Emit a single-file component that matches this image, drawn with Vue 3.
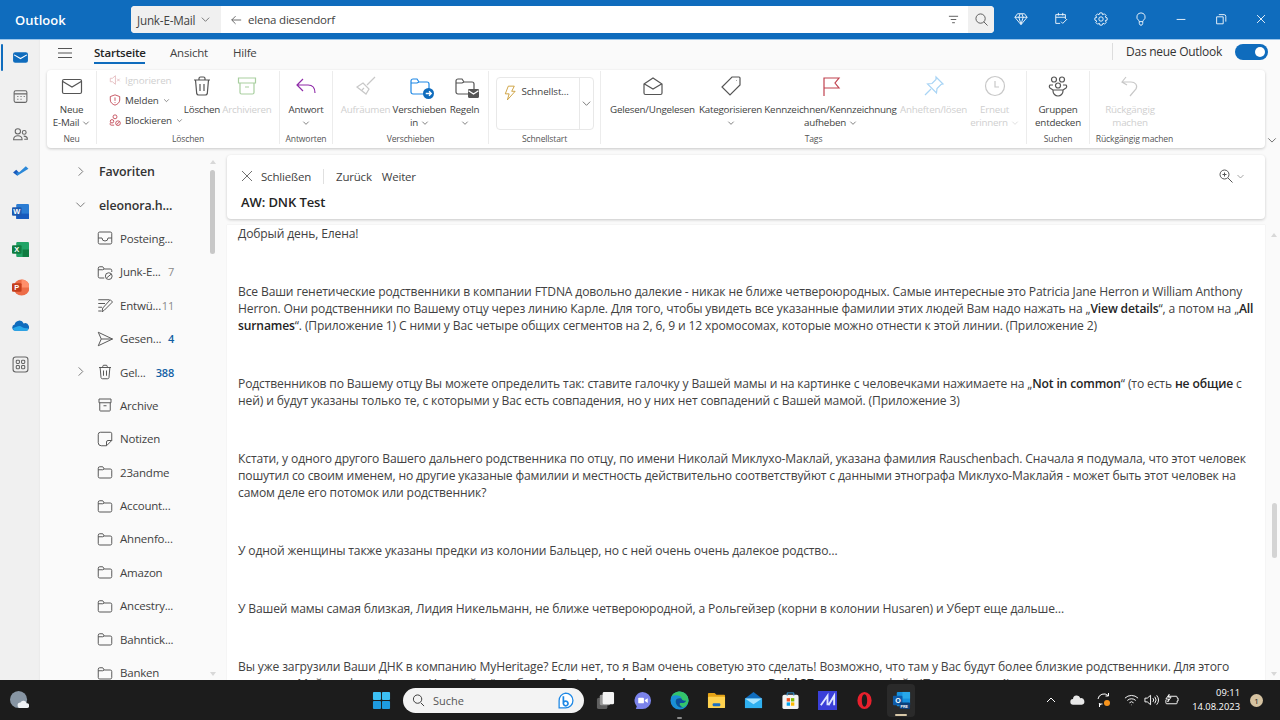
<script setup>
const stroke = {
  mail: 'M4 5.500h16a1.500 1.500 0 0 1 1.500 1.500v11a1.500 1.500 0 0 1-1.500 1.500H4A1.500 1.500 0 0 1 2.500 18V7A1.500 1.500 0 0 1 4 5.500zM2.800 7.500l9.200 5.500 9.200-5.500',
  trash: 'M4 6h16M9 6V4.500A1.500 1.500 0 0 1 10.500 3h3A1.500 1.500 0 0 1 15 4.500V6M5.500 6l1.200 13.500A2 2 0 0 0 8.700 21h6.600a2 2 0 0 0 2-1.500L18.500 6M10 10v7M14 10v7',
  archive: 'M3.500 4h17v5h-17zM5 9v9.500A1.500 1.500 0 0 0 6.500 20h11a1.500 1.500 0 0 0 1.500-1.500V9M10 13h4',
  reply: 'M9 5l-6 6 6 6M3 11h11c4 0 7 2.500 7 8',
  broom: 'M21 3l-8 8M9 9l6 6-3 5-9-7zM8 16l2-2',
  folder: 'M3 7a2 2 0 0 1 2-2h4l2 3h8a2 2 0 0 1 2 2v8a2 2 0 0 1-2 2H5a2 2 0 0 1-2-2zM3 9h6l2-1',
  open: 'M3 10l9-6 9 6v9a1.500 1.500 0 0 1-1.500 1.500h-15A1.500 1.500 0 0 1 3 19zM3.500 10l8.500 5 8.500-5',
  tag: 'M13 3h7a1 1 0 0 1 1 1v7L11 21l-8-8zM17 6.500h.5',
  flag: 'M5 22V4h15l-4 5 4 5H5',
  pin: 'M14 3l7 7-2 .5-4 4-.5 4.500-9-9 4.500-.5 4-4zM9 15l-6 6',
  clock: 'M12 2.500a9.500 9.500 0 1 0 0 19 9.500 9.500 0 0 0 0-19zM12 7v6h4',
  groups: 'M8 3a2.500 2.500 0 1 0 0 5 2.500 2.500 0 0 0 0-5zM16 3a2.500 2.500 0 1 0 0 5 2.500 2.500 0 0 0 0-5zM12 9a2.500 2.500 0 1 0 0 5 2.500 2.500 0 0 0 0-5zM7 11H4a2 2 0 0 0 0 3l3 2M17 11h3a2 2 0 0 1 0 3l-3 2M7 16h10v1a5 5 0 0 1-10 0z',
  undo: 'M8 3L4 8l5 3M4 8h9c4 0 7 3 5 7l-6 7',
  inbox: 'M5 4h14a2 2 0 0 1 2 2v12a2 2 0 0 1-2 2H5a2 2 0 0 1-2-2V6a2 2 0 0 1 2-2zM3 12h5a4 4 0 0 0 8 0h5',
  junk: 'M3 7a2 2 0 0 1 2-2h4l2 3h8a2 2 0 0 1 2 2v2M3 7v11a2 2 0 0 0 2 2h6M3 9h6l2-1M17 13a4.500 4.500 0 1 0 0 9 4.500 4.500 0 0 0 0-9zM14 20l6-5',
  draft: 'M3 5h15M3 10h9M3 15h5M8 21l1-5L19 5l3 3-11 11zM3 20h4',
  sent: 'M3 3l19 9-19 9 4-9zM7 12h15',
  note: 'M6 3h13a2 2 0 0 1 2 2v9l-7 7H7a4 4 0 0 1-4-4V6a3 3 0 0 1 3-3zM21 14h-5a2 2 0 0 0-2 2v5',
  box: 'M4 4h16v5H4zM5 9v10a1 1 0 0 0 1 1h12a1 1 0 0 0 1-1V9M10 13h4'
}

const ribbonGroups = [
  { name: 'Neu', width: 50, tools: [{ icon: 'mail', label: ['Neue', 'E-Mail'], chev: true, width: 50, color: '#555' }] },
  { name: 'Löschen', width: 183, stack: true, tools: [
    { icon: 'trash', label: ['Löschen'], width: 44, color: '#555' },
    { icon: 'archive', label: ['Archivieren'], width: 46, color: '#a9cfa0', off: true }
  ] },
  { name: 'Antworten', width: 53, tools: [{ icon: 'reply', label: ['Antwort', ''], chev: true, width: 53, color: '#8f2ba8' }] },
  { name: 'Verschieben', width: 156, tools: [
    { icon: 'broom', label: ['Aufräumen'], width: 56, color: '#c8c8c8', off: true },
    { icon: 'folder', label: ['Verschieben', 'in'], chev: true, width: 52, color: '#1e88e5', badge: 'move' },
    { icon: 'folder', label: ['Regeln', ''], chev: true, width: 38, color: '#555', badge: 'rules' }
  ] },
  { name: 'Schnellstart', width: 112, quick: true, tools: [] },
  { name: 'Tags', width: 426, tools: [
    { icon: 'open', label: ['Gelesen/Ungelesen'], width: 88, color: '#555' },
    { icon: 'tag', label: ['Kategorisieren', ''], chev: true, width: 68, color: '#555' },
    { icon: 'flag', label: ['Kennzeichnen/Kennzeichnung', 'aufheben'], chev: true, width: 132, color: '#c0424f' },
    { icon: 'pin', label: ['Anheften/lösen'], width: 74, color: '#a8d4f5', off: true },
    { icon: 'clock', label: ['Erneut', 'erinnern'], chev: true, width: 48, color: '#c8c8c8', off: true }
  ] },
  { name: 'Suchen', width: 63, tools: [{ icon: 'groups', label: ['Gruppen', 'entdecken'], width: 63, color: '#555' }] },
  { name: 'Rückgängig machen', width: 175, wide: true, tools: [{ icon: 'undo', label: ['Rückgängig', 'machen'], width: 80, color: '#c8c8c8', off: true }] }
]

const folders = [
  { label: 'Posteing...', icon: 'inbox' },
  { label: 'Junk-E...', icon: 'junk', count: '7' },
  { label: 'Entwü...', icon: 'draft', count: '11' },
  { label: 'Gesen...', icon: 'sent', count: '4', blue: true },
  { label: 'Gel...', icon: 'trash', count: '388', blue: true, arrow: true },
  { label: 'Archive', icon: 'box' },
  { label: 'Notizen', icon: 'note' },
  { label: '23andme', icon: 'folder' },
  { label: 'Account...', icon: 'folder' },
  { label: 'Ahnenfo...', icon: 'folder' },
  { label: 'Amazon', icon: 'folder' },
  { label: 'Ancestry...', icon: 'folder' },
  { label: 'Bahntick...', icon: 'folder' },
  { label: 'Banken', icon: 'folder' }
]
</script>

<template>
  <div class="app">
    <header class="titlebar">
      <div class="brand">Outlook</div>
      <div class="search">
        <div class="scope">Junk-E-Mail
          <svg class="chev-s" viewBox="0 0 12 12"><path d="M2 4l4 4 4-4" /></svg>
        </div>
        <svg class="back" viewBox="0 0 14 14"><path d="M13 7H2M6.500 2.500L2 7l4.500 4.500" /></svg>
        <div class="query">elena diesendorf</div>
        <svg class="filter" viewBox="0 0 12 12"><path d="M1 2.500h10M3 6h6M4.500 9.500h3" /></svg>
        <div class="search-btn">
          <svg viewBox="0 0 14 14"><path d="M6 1a5 5 0 1 0 0 10A5 5 0 0 0 6 1zM9.500 9.500L13.500 13.500" /></svg>
        </div>
      </div>
      <div class="win-icons">
        <svg viewBox="0 0 16 16"><path d="M4 2h8l3 4-7 8.500L1 6zM1 6h14M5.500 6L8 14l2.500-8M5.500 6L7 2M10.500 6L9 2" /></svg>
        <svg viewBox="0 0 16 16"><path d="M2 3h11v5M2 3v10h5M2 6h11M5 1v3M10 1v3M8 11l2 2 5-5" /></svg>
        <svg viewBox="0 0 16 16"><path d="M8 5.500a2.500 2.500 0 1 0 0 5 2.500 2.500 0 0 0 0-5zM6.700 1L9.300 1 9.700 3 12.030 2.130 13.870 3.970 12.740 5.670 15 6.700 15 9.300 13 9.700 13.870 12.030 12.030 13.870 10.330 12.740 9.300 15 6.700 15 6.300 13 3.970 13.870 2.130 12.030 3.260 10.330 1 9.300 1 6.700 3 6.300 2.130 3.970 3.970 2.130 5.670 3.260z" /></svg>
        <svg viewBox="0 0 16 16"><path d="M8 1a4.700 4.700 0 0 0-2.800 8.500c.5.500.8 1 .8 1.500h4c0-.5.3-1 .8-1.500A4.700 4.700 0 0 0 8 1zM6 11v2l1 2h2l1-2v-2" /></svg>
        <svg viewBox="0 0 16 16"><path d="M3 8.500h10" /></svg>
        <svg viewBox="0 0 16 16"><path d="M3 5.500h7.500v8H3zM5.500 3h6a2 2 0 0 1 2 2v6" /></svg>
        <svg viewBox="0 0 16 16"><path d="M3.500 3.500l9 9M12.500 3.500l-9 9" /></svg>
      </div>
    </header>

    <div class="workspace">
      <nav class="rail">
        <div class="rail-item active">
          <svg viewBox="0 0 16 16"><rect x="1" y="3" width="14" height="10" rx="2" fill="#0f6cbd" /><path d="M2 5.500l6 3.500 6-3.500" stroke="#fff" /></svg>
        </div>
        <div class="rail-item">
          <svg viewBox="0 0 16 16"><rect x="2" y="2.500" width="12" height="11" rx="1.500" stroke="#666" /><path d="M2 5.500h12M5 8h1M8 8h1M11 8h1M5 10.500h1M8 10.500h1" stroke="#666" /></svg>
        </div>
        <div class="rail-item">
          <svg viewBox="0 0 16 16"><g stroke="#666"><circle cx="5.500" cy="5" r="2.500" /><circle cx="11.500" cy="6" r="1.800" /><path d="M1.500 13c0-5 8-5 8 0zM11 9.500c2.500 0 3.500 1 3.500 3h-3" /></g></svg>
        </div>
        <div class="rail-item">
          <svg viewBox="0 0 16 16"><path d="M1 8l3-2.500L6.500 8 5 11z" fill="#185abd" /><path d="M5 11L4 8l2.500 0L13 2l2.500 2.500z" fill="#2b88d8" /></svg>
        </div>
        <div class="rail-item">
          <svg viewBox="0 0 16 16"><rect x="4" y="1" width="12" height="14" rx="1" fill="#2b7cd3" /><rect x="4" y="10" width="12" height="5" fill="#185abd" /><rect y="4" width="9" height="8" rx="1" fill="#1d5ab0" /><text x="4.500" y="10.500" class="rail-letter">W</text></svg>
        </div>
        <div class="rail-item">
          <svg viewBox="0 0 16 16"><rect x="4" y="1" width="12" height="14" rx="1" fill="#21a366" /><rect x="10" y="8" width="6" height="7" fill="#107c41" /><rect y="4" width="9" height="8" rx="1" fill="#107c41" /><text x="4.500" y="10.500" class="rail-letter">X</text></svg>
        </div>
        <div class="rail-item">
          <svg viewBox="0 0 16 16"><circle cx="9" cy="8" r="7.500" fill="#ed6c47" /><path d="M9 .5a7.500 7.500 0 0 1 7.500 7.500H9z" fill="#ff8f6b" /><rect y="4" width="9" height="8" rx="1" fill="#c43e1c" /><text x="4.500" y="10.500" class="rail-letter">P</text></svg>
        </div>
        <div class="rail-item">
          <svg viewBox="0 0 16 16"><path d="M3 13a3 3 0 0 1-.5-5.900A4.500 4.500 0 0 1 11 6a3.500 3.500 0 0 1 2.500 7z" fill="#0f6cbd" /><path d="M1 10.500c3-1 4-2 6-2s4 3 8 2c.5 1.500 0 2.500-1.500 2.500H3c-1 0-2-1-2-2.500z" fill="#28a8ea" /></svg>
        </div>
        <div class="rail-item">
          <svg viewBox="0 0 16 16"><g stroke="#666"><rect x="1" y="1" width="14" height="14" rx="2.500" /><rect x="4" y="4" width="3" height="3" rx=".8" /><rect x="9" y="4" width="3" height="3" rx=".8" /><rect x="4" y="9" width="3" height="3" rx=".8" /><rect x="9" y="9" width="3" height="3" rx=".8" /></g></svg>
        </div>
      </nav>

      <div class="content">
        <div class="tabs">
          <svg class="burger" viewBox="0 0 16 12"><path d="M1 1.500h14M1 6h14M1 10.500h14" /></svg>
          <div class="tab current">Startseite</div>
          <div class="tab tab-view">Ansicht</div>
          <div class="tab tab-help">Hilfe</div>
          <div class="new-outlook">Das neue Outlook</div>
          <div class="toggle"><span></span></div>
        </div>

        <section class="ribbon">
          <div
            v-for="group in ribbonGroups"
            :key="group.name"
            class="group"
            :class="{ 'group-wide': group.wide }"
            :style="{ width: `${group.width}px` }"
          >
            <div class="group-tools" :class="{ 'tools-left': group.stack }">
              <div v-if="group.stack" class="stack">
                <div class="stack-row off">
                  <svg viewBox="0 0 14 14"><path d="M1.500 5v4h2.500l3.500 3V2L4 5zM9.500 5.500l3 3M12.500 5.500l-3 3" stroke="#e3b9bc" /></svg>
                  Ignorieren
                </div>
                <div class="stack-row">
                  <svg viewBox="0 0 14 14"><path d="M7 1l5.500 2v4c0 3-2.500 5-5.500 6-3-1-5.500-3-5.500-6V3zM7 4v4M7 9.500v1" stroke="#c0424f" /></svg>
                  Melden <svg class="mini-chev" viewBox="0 0 12 12"><path d="M2 4l4 4 4-4" /></svg>
                </div>
                <div class="stack-row">
                  <svg viewBox="0 0 14 14"><path d="M7 1a2.300 2.300 0 1 0 0 4.600A2.300 2.300 0 0 0 7 1zM3.500 6.500a2 2 0 1 0 0 4 2 2 0 0 0 0-4zM6 13H2.500C1 13 1 11 2 10M10.500 8a2.700 2.700 0 1 0 0 5.400 2.700 2.700 0 0 0 0-5.400zM8.700 12.500l3.600-3.500" stroke="#c0424f" /></svg>
                  Blockieren <svg class="mini-chev" viewBox="0 0 12 12"><path d="M2 4l4 4 4-4" /></svg>
                </div>
              </div>
              <div v-if="group.quick" class="quick">
                <div class="quick-main">
                  <svg viewBox="0 0 14 18"><path d="M5 1h7L9 7h4L4 17l2-7H1.500z" /></svg>
                  Schnellst...
                </div>
                <div class="quick-more">
                  <svg class="chev-s" viewBox="0 0 12 12"><path d="M2 4l4 4 4-4" /></svg>
                </div>
              </div>
              <div
                v-for="tool in group.tools"
                :key="tool.label[0]"
                class="tool"
                :class="{ off: tool.off }"
                :style="{ width: `${tool.width}px` }"
              >
                <div class="tool-icon">
                  <svg viewBox="0 0 24 24"><path :d="stroke[tool.icon]" :style="{ stroke: tool.color }" /></svg>
                  <svg v-if="tool.badge === 'move'" class="badge" viewBox="0 0 10 10"><circle cx="5" cy="5" r="5" fill="#0f6cbd" /><path d="M2.500 5h5M5.500 3l2 2-2 2" /></svg>
                  <svg v-if="tool.badge === 'rules'" class="badge" viewBox="0 0 10 10"><rect y="1" width="10" height="8" rx="1" fill="#555" /><path d="M.5 2.500L5 5.500l4.500-3" /></svg>
                </div>
                <div v-for="(line, i) in tool.label" :key="i" class="tool-label">
                  {{ line }}
                  <svg v-if="tool.chev && i === tool.label.length - 1" class="mini-chev" viewBox="0 0 12 12"><path d="M2 4l4 4 4-4" /></svg>
                </div>
              </div>
            </div>
            <div class="group-name">{{ group.name }}</div>
          </div>
          <svg class="collapse" viewBox="0 0 12 12"><path d="M1.500 4L6 8.500 10.500 4" /></svg>
        </section>

        <div class="lower">
          <aside class="folders">
            <div class="folder-list">
              <div class="folder-head">
                <svg class="head-chev" viewBox="0 0 12 12"><path d="M4 1.500L8.500 6 4 10.500" /></svg>
                Favoriten
              </div>
              <div class="folder-head">
                <svg class="head-chev" viewBox="0 0 12 12"><path d="M1.500 4L6 8.500 10.500 4" /></svg>
                eleonora.h...
              </div>
              <div v-for="folder in folders" :key="folder.label" class="folder">
                <svg v-if="folder.arrow" class="folder-arrow" viewBox="0 0 12 12"><path d="M4 1.500L8.500 6 4 10.500" /></svg>
                <svg class="folder-icon" viewBox="0 0 24 24"><path :d="stroke[folder.icon]" /></svg>
                <span class="folder-label">{{ folder.label }}</span>
                <span v-if="folder.count" class="count" :class="{ blue: folder.blue }">{{ folder.count }}</span>
              </div>
            </div>
            <div class="pane-scroll">
              <span class="arrow-up"></span>
              <span class="pane-thumb"></span>
              <span class="arrow-down"></span>
            </div>
          </aside>

          <main class="reader">
            <div class="read-head">
              <div class="read-actions">
                <svg class="close-x" viewBox="0 0 12 12"><path d="M1 1l10 10M11 1L1 11" /></svg>
                <span>Schließen</span>
                <i class="action-sep"></i>
                <span>Zurück</span>
                <span class="next">Weiter</span>
                <svg class="zoom-ico" viewBox="0 0 14 14"><path d="M5.500 1a4.500 4.500 0 1 0 0 9 4.500 4.500 0 0 0 0-9zM9 9l4.500 4.500M3.500 5.500h4M5.500 3.500v4" /></svg>
                <svg class="zoom-chev" viewBox="0 0 12 12"><path d="M2 4l4 4 4-4" /></svg>
              </div>
              <div class="subject">AW: DNK Test</div>
            </div>
            <div class="message-row">
              <article class="message">
                <p>Добрый день, Елена!</p>
                <p>Все Ваши генетические родственники в компании FTDNA довольно далекие - никак не ближе четвероюродных. Самые интересные это Patricia Jane Herron и William Anthony<br>Herron. Они родственники по Вашему отцу через линию Карле. Для того, чтобы увидеть все указанные фамилии этих людей Вам надо нажать на „<b>View details</b>“, а потом на „<b>All</b><br><b>surnames</b>“. (Приложение 1) С ними у Вас четыре общих сегментов на 2, 6, 9 и 12 хромосомах, которые можно отнести к этой линии. (Приложение 2)</p>
                <p>Родственников по Вашему отцу Вы можете определить так: ставите галочку у Вашей мамы и на картинке с человечками нажимаете на „<b>Not in common</b>“ (то есть <b>не общие</b> с<br>ней) и будут указаны только те, с которыми у Вас есть совпадения, но у них нет совпадений с Вашей мамой. (Приложение 3)</p>
                <p>Кстати, у одного другого Вашего дальнего родственника по отцу, по имени Николай Миклухо-Маклай, указана фамилия Rauschenbach. Сначала я подумала, что этот человек<br>пошутил со своим именем, но другие указаные фамилии и местность действительно соответствуйют с данными этнографа Миклухо-Маклайя - может быть этот человек на<br>самом деле его потомок или родственник?</p>
                <p>У одной женщины также указаны предки из колонии Бальцер, но с ней очень очень далекое родство…</p>
                <p>У Вашей мамы самая близкая, Лидия Никельманн, не ближе четвероюродной, а Рольгейзер (корни в колонии Husaren) и Уберт еще дальше…</p>
                <p>Вы уже загрузили Ваши ДНК в компанию MyHeritage? Если нет, то я Вам очень советую это сделать! Возможно, что там у Вас будут более близкие родственники. Для этого<br>нажмите „Мой профиль“, затем „Настройки“, выберите <b>Data download</b> и затем нажмите на <b>Build 37</b> и загрузите файл (Приложение 4)</p>
              </article>
              <div class="main-scroll">
                <span class="arrow-up"></span>
                <span class="main-thumb"></span>
                <span class="arrow-down"></span>
              </div>
            </div>
          </main>
        </div>
      </div>
    </div>

    <footer class="taskbar">
      <div class="weather">
        <svg viewBox="0 0 20 20"><circle cx="9" cy="9" r="9" fill="#8795a3" /><path d="M11 18a3 3 0 0 1 0-6 3.500 3.500 0 0 1 6.500 1 2.500 2.500 0 0 1 .5 5z" fill="#eef1f4" /></svg>
      </div>
      <div class="dock">
        <svg class="dock-ico" viewBox="0 0 20 20"><rect x="1" y="1" width="8.500" height="8.500" rx="1" fill="#3cc0f4" /><rect x="10.500" y="1" width="8.500" height="8.500" rx="1" fill="#3cc0f4" /><rect x="1" y="10.500" width="8.500" height="8.500" rx="1" fill="#1e9be0" /><rect x="10.500" y="10.500" width="8.500" height="8.500" rx="1" fill="#1e9be0" /></svg>
        <div class="task-search">
          <svg viewBox="0 0 14 14"><path d="M6 1a4.500 4.500 0 1 0 0 9 4.500 4.500 0 0 0 0-9zM9.500 9.500l3.500 3.500" /></svg>
          <span>Suche</span>
          <svg class="bing" viewBox="0 0 16 16"><path d="M8 1a7 7 0 0 1 0 14H2V8a7 7 0 0 1 6-7z" fill="#fff" stroke-width="1.200" /><path d="M6 4v7a2.200 2.200 0 1 0 0-.5" stroke-width="1.600" /></svg>
        </div>
        <svg class="dock-ico" viewBox="0 0 20 20"><rect x="1" y="7" width="11" height="12" rx="2" fill="#5f5f5f" /><rect x="4" y="4" width="11" height="11" rx="1.500" fill="#9a9a9a" /><rect x="7" y="1" width="12" height="13" rx="1.500" fill="#f4f4f4" /></svg>
        <svg class="dock-ico" viewBox="0 0 20 20"><path d="M10 1a9 9 0 0 1 0 18H3l1-3a9 9 0 0 1 6-15z" fill="#7b83eb" /><rect x="5.500" y="7" width="6" height="6" rx="1" fill="#fff" /><path d="M12.500 9.500l3-2v5l-3-2z" fill="#fff" /></svg>
        <span class="edge-wrap">
          <svg class="dock-ico" viewBox="0 0 20 20"><circle cx="10" cy="10" r="9.500" fill="#1a8fd8" /><path d="M19.500 10c0-5-4-9.500-9.500-9.500C6 .5 2.500 3 1.500 6 5 3.500 11 4 12.500 8c-3-1.500-7 0-6.500 4 .5 4 5 6 8 5 3-1 5.500-4 5.500-7z" fill="#34c46a" /><path d="M6 11c0-3 3-4 6-3 1 2 3 3 5 2-1 3-4 3-6 2.500-2 .5 0 4 3 4.500-4 1.500-8-2-8-6z" fill="#0b4f9e" /></svg>
        </span>
        <svg class="dock-ico" viewBox="0 0 20 20"><path d="M1 3a1 1 0 0 1 1-1h6l2 2h8a1 1 0 0 1 1 1v3H1z" fill="#e5a316" /><rect x="1" y="6" width="18" height="12" rx="1" fill="#ffd24f" /><rect x="6" y="13" width="8" height="3" rx="1" fill="#1b6fc2" /></svg>
        <svg class="dock-ico" viewBox="0 0 20 20"><path d="M10 1l9 7v10H1V8z" fill="#0f6cbd" /><rect x="1" y="8" width="18" height="10" fill="#2fb0f0" /><path d="M1 8l9 6 9-6" fill="#a6e3ff" /></svg>
        <svg class="dock-ico" viewBox="0 0 20 20"><rect x="1.500" y="4" width="17" height="15" rx="2" fill="#f4f4f4" /><path d="M6.500 5V2h7v3" stroke="#3aa0e0" /><rect x="6" y="7.500" width="3.500" height="3.500" fill="#f25022" /><rect x="10.500" y="7.500" width="3.500" height="3.500" fill="#7fba00" /><rect x="6" y="12" width="3.500" height="3.500" fill="#00a4ef" /><rect x="10.500" y="12" width="3.500" height="3.500" fill="#ffb900" /></svg>
        <svg class="dock-ico" viewBox="0 0 20 20"><rect width="20" height="20" fill="#3a3fd8" /><path d="M3 15L10 5v10M11 15L17 5v10" stroke="#dfe6ff" stroke-width="2" /></svg>
        <svg class="dock-ico" viewBox="0 0 20 20"><path d="M10 1a7.500 9 0 1 0 0 18 7.500 9 0 0 0 0-18zm0 2.500c1.800 0 2.800 3 2.800 6.500s-1 6.500-2.800 6.500S7.200 13.500 7.200 10 8.200 3.500 10 3.500z" fill="#e8202d" /></svg>
        <div class="dock-active">
          <svg class="dock-ico" viewBox="0 0 20 20"><rect x="5" y="1" width="14" height="15" rx="1" fill="#1490df" /><rect x="11" y="1" width="8" height="7" fill="#28a8ea" /><rect x="1" y="5" width="10" height="10" rx="1" fill="#0f5ba7" /><text x="3.300" y="13" class="outlook-letter">O</text><rect x="8" y="12" width="11" height="7" rx="1" fill="#0c3f7a" /><text x="9" y="17.500" class="pre-letter">PRE</text></svg>
        </div>
      </div>
      <div class="tray">
        <svg class="tray-up" viewBox="0 0 12 12"><path d="M2 8l4-4 4 4" /></svg>
        <svg class="tray-cloud" viewBox="0 0 16 12"><path d="M3.500 11a3 3 0 0 1-.3-6A4 4 0 0 1 11 4a3.500 3.500 0 0 1 1.500 7z" fill="#e8e8e8" /></svg>
        <svg class="tray-sync" viewBox="0 0 16 16"><path d="M2 7a6 6 0 0 1 10-3.500M12.500 1v3h-3M3 11a5 5 0 0 0 2 2M3.500 15v-3h3" /><circle cx="11" cy="11" r="3" fill="#f7941d" /></svg>
        <svg class="tray-ico" viewBox="0 0 16 14"><path d="M1 5a10 10 0 0 1 14 0M3.500 7.500a6.500 6.500 0 0 1 9 0M5.800 10a3 3 0 0 1 4.400 0M8 12v.5" /></svg>
        <svg class="tray-ico" viewBox="0 0 16 14"><path d="M1 5v4h2.500L7 12V2L3.500 5zM9.500 5a3 3 0 0 1 0 4M11.500 3.500a5.500 5.500 0 0 1 0 7M13.500 2a8 8 0 0 1 0 10" /></svg>
        <svg class="tray-ico" viewBox="0 0 16 14"><path d="M5 3h8a1 1 0 0 1 1 1v1h1v3h-1v2a1 1 0 0 1-1 1H3a1 1 0 0 1-1-1V7M5.500 1L2 6h3l-1 3 3.500-5h-3z" /></svg>
        <div class="clock">
          <div>09:11</div>
          <div>14.08.2023</div>
        </div>
        <div class="notify">1</div>
      </div>
    </footer>
  </div>
</template>

<style scoped>
.app {
  width: 1280px;
  height: 720px;
  display: flex;
  flex-direction: column;
  overflow: hidden;
  background: #fafafa;
  color: #424242;
  font-family: "Open Sans", "Noto Sans", sans-serif;
  font-size: 11px;
}

svg {
  display: block;
  flex: none;
  fill: none;
}

.titlebar {
  height: 39px;
  flex: none;
  display: flex;
  align-items: center;
  background: #0f6cbd;
  color: #fff;
  border-bottom: 1px solid #9cc6ea;
  box-sizing: content-box;
}

.brand {
  width: 131px;
  padding-left: 15px;
  box-sizing: border-box;
  font-size: 13px;
  font-weight: 600;
}

.search {
  width: 863px;
  height: 27px;
  display: flex;
  align-items: center;
  background: #fff;
  border-radius: 4px;
  color: #424242;
  overflow: hidden;
}

.scope {
  width: 90px;
  height: 100%;
  flex: none;
  display: flex;
  align-items: center;
  gap: 5px;
  padding-left: 6px;
  box-sizing: border-box;
  background: #f0f0f0;
  font-size: 11.7px;
  letter-spacing: -0.2px;
}

.chev-s {
  width: 11px;
  height: 11px;
}

.chev-s path {
  stroke: #616161;
  stroke-width: 0.9;
}

.back {
  width: 12px;
  height: 12px;
  margin-left: 9px;
}

.back path,
.filter path {
  stroke: #555;
}

.query {
  flex: 1;
  margin-left: 6px;
  font-size: 11.5px;
  letter-spacing: -0.2px;
}

.filter {
  width: 11px;
  height: 11px;
  margin-right: 9px;
}

.search-btn {
  width: 26px;
  height: 100%;
  display: flex;
  align-items: center;
  justify-content: center;
  background: #f0f0f0;
}

.search-btn svg {
  width: 13px;
  height: 13px;
}

.search-btn path {
  stroke: #555;
}

.win-icons {
  display: flex;
  gap: 26px;
  margin: -2px 0 0 20px;
}

.win-icons svg {
  width: 14px;
  height: 14px;
}

.win-icons path {
  stroke: #fff;
}

.workspace {
  flex: 1;
  min-height: 0;
  display: flex;
}

.rail {
  width: 40px;
  flex: none;
  background: #f0f0f0;
  box-shadow: inset -2px 0 2px -2px #ddd;
}

.rail-item {
  position: relative;
  height: 38.3px;
  display: flex;
  align-items: center;
  justify-content: center;
}

.rail-item:first-child {
  margin: -2px 0 0.7px;
}

.rail-item svg {
  width: 17px;
  height: 17px;
}

.rail-item.active::before {
  content: "";
  position: absolute;
  left: 1px;
  top: 6px;
  bottom: 5px;
  width: 2px;
  border-radius: 1px;
  background: #0f6cbd;
}

.rail-letter {
  font-family: "Liberation Sans", sans-serif;
  font-size: 7px;
  font-weight: 700;
  fill: #fff;
  text-anchor: middle;
}

.content {
  flex: 1;
  min-width: 0;
  display: flex;
  flex-direction: column;
}

.tabs {
  height: 30px;
  flex: none;
  display: flex;
  align-items: center;
  padding-bottom: 4px;
  box-sizing: border-box;
  font-size: 11.5px;
  letter-spacing: -0.2px;
}

.burger {
  width: 16px;
  height: 12px;
  margin: 0 21px 0 17px;
}

.burger path {
  stroke: #555;
}

.tab {
  line-height: 18px;
}

.tab.current {
  width: 51px;
  font-weight: 600;
  color: #242424;
  box-shadow: 0 2px 0 #0f6cbd;
}

.tab-view,
.tab-help {
  margin-left: 25px;
}

.new-outlook {
  margin: 0 0 3px auto;
  padding-left: 13px;
  border-left: 1px solid #ddd;
  color: #333;
  font-size: 12px;
  letter-spacing: -0.27px;
}

.toggle {
  width: 33px;
  height: 16px;
  margin: 0 12px 3px 13px;
  padding: 3px;
  box-sizing: border-box;
  display: flex;
  justify-content: flex-end;
  border-radius: 8px;
  background: #0f6cbd;
}

.toggle span {
  width: 10px;
  height: 10px;
  border-radius: 50%;
  background: #fff;
}

.ribbon {
  position: relative;
  width: 1218px;
  height: 78px;
  margin-left: 7px;
  flex: none;
  display: flex;
  padding-top: 1px;
  box-sizing: border-box;
  background: #fff;
  border-radius: 4px;
  box-shadow: 0 1px 3px rgba(0, 0, 0, 0.2);
}

.collapse {
  position: absolute;
  right: -12px;
  bottom: 3px;
  width: 10px;
  height: 10px;
}

.collapse path {
  stroke: #555;
}

.group {
  height: 73px;
  display: flex;
  flex-direction: column;
  box-sizing: border-box;
  border-right: 1px solid #ececec;
}

.group-wide {
  border-right: 0;
}

.group-tools {
  flex: 1;
  display: flex;
  justify-content: center;
  min-height: 0;
}

.tools-left,
.group-wide .group-tools {
  justify-content: flex-start;
}

.group-name {
  height: 15px;
  font-size: 8.6px;
  line-height: 20px;
  text-align: center;
  color: #555;
  white-space: nowrap;
  letter-spacing: -0.15px;
}

.group-wide .group-name {
  padding-right: 86px;
}

.tool {
  flex: none;
  display: flex;
  flex-direction: column;
  align-items: center;
  font-size: 9.8px;
  letter-spacing: -0.22px;
  line-height: 13.3px;
  color: #424242;
  white-space: nowrap;
}

.tool.off,
.stack-row.off {
  color: #cfcfcf;
}

.tool-icon {
  position: relative;
  width: 24px;
  height: 24px;
  margin: 3px 0 5px;
}

.tool-icon svg {
  width: 24px;
  height: 24px;
}

.tool-icon path {
  stroke-width: 1.2;
}

.tool-icon .badge {
  position: absolute;
  right: -2px;
  bottom: -1px;
  width: 11px;
  height: 11px;
}

.tool-icon .badge path {
  stroke: #fff;
}

.tool-label {
  height: 13.3px;
  display: flex;
  align-items: center;
  gap: 3px;
}

.mini-chev {
  width: 8px;
  height: 8px;
}

.mini-chev path {
  stroke: currentColor;
}

.stack {
  width: 83px;
  margin-top: -1px;
  padding-left: 12px;
  box-sizing: border-box;
  font-size: 9.8px;
  letter-spacing: -0.1px;
}

.stack-row {
  height: 20px;
  display: flex;
  align-items: center;
  gap: 4px;
  white-space: nowrap;
}

.stack-row svg {
  width: 12px;
  height: 12px;
}

.stack-row .mini-chev {
  width: 7px;
  height: 7px;
}

.quick {
  width: 98px;
  height: 53px;
  margin-top: 6px;
  display: flex;
  border: 1px solid #e8e8e8;
  border-radius: 4px;
  box-sizing: border-box;
  font-size: 9.8px;
  letter-spacing: -0.1px;
}

.quick-main {
  flex: 1;
  display: flex;
  align-items: flex-start;
  gap: 6px;
  padding: 7px 0 0 7px;
}

.quick-main svg {
  width: 12px;
  height: 16px;
}

.quick-main path {
  stroke: #c8972b;
}

.quick-more {
  width: 13px;
  display: flex;
  align-items: center;
  justify-content: center;
  border-left: 1px solid #e8e8e8;
}

.lower {
  flex: 1;
  min-height: 0;
  display: flex;
  margin-top: 7px;
}

.folders {
  width: 180px;
  margin-left: 7px;
  flex: none;
  display: flex;
  overflow: hidden;
}

.folder-list {
  width: 136px;
  margin-right: 24px;
  padding-left: 28px;
  box-sizing: border-box;
}

.folder-head {
  position: relative;
  height: 33.4px;
  display: flex;
  align-items: center;
  padding-left: 24px;
  font-size: 12.4px;
  font-weight: 600;
  letter-spacing: -0.1px;
  color: #333;
  white-space: nowrap;
}

.head-chev,
.folder-arrow {
  position: absolute;
  left: 0;
  top: 11px;
  width: 11px;
  height: 11px;
}

.head-chev path,
.folder-arrow path {
  stroke: #707070;
}

.folder {
  position: relative;
  height: 33.4px;
  display: flex;
  align-items: center;
  padding-left: 21px;
  font-size: 11.5px;
  letter-spacing: -0.2px;
  white-space: nowrap;
}

.folder-icon {
  width: 18px;
  height: 18px;
  margin-right: 6px;
}

.folder-icon path {
  stroke: #555;
  stroke-width: 1.3;
}

.folder-label {
  flex: 1;
  min-width: 0;
}

.count {
  padding-right: 9px;
  font-size: 11px;
  color: #8a8a8a;
}

.count.blue {
  color: #115ea3;
  font-weight: 600;
}

.pane-scroll {
  width: 9px;
  margin-left: 1px;
  display: flex;
  flex-direction: column;
  align-items: center;
}

.pane-thumb {
  width: 5px;
  height: 84px;
  margin-top: 6px;
  border-radius: 3px;
  background: #c8c8c8;
}

.arrow-up,
.arrow-down {
  width: 0;
  height: 0;
  border-left: 3.5px solid transparent;
  border-right: 3.5px solid transparent;
}

.arrow-up {
  margin-top: 5px;
  border-bottom: 4px solid #d8d8d8;
}

.arrow-down {
  margin-top: auto;
  margin-bottom: 4px;
  border-top: 4px solid #d8d8d8;
}

.reader {
  flex: 1;
  min-width: 0;
  display: flex;
  flex-direction: column;
}

.read-head {
  width: 1038px;
  height: 64px;
  flex: none;
  padding: 11px 0 0 14px;
  box-sizing: border-box;
  background: #fff;
  border-radius: 4px;
  box-shadow: 0 1px 3px rgba(0, 0, 0, 0.2);
}

.read-actions {
  display: flex;
  align-items: center;
  height: 20px;
  font-size: 11.5px;
  letter-spacing: -0.2px;
}

.close-x {
  width: 12px;
  height: 12px;
  margin-right: 8px;
}

.close-x path {
  stroke: #707070;
}

.action-sep {
  width: 1px;
  height: 15px;
  margin: 0 12px;
  background: #e0e0e0;
}

.next {
  margin-left: 10px;
}

.zoom-ico {
  width: 14px;
  height: 14px;
  margin-left: auto;
}

.zoom-ico path {
  stroke: #555;
}

.zoom-chev {
  width: 9px;
  height: 9px;
  margin: 0 20px 0 3px;
}

.zoom-chev path {
  stroke: #888;
}

.subject {
  margin-top: 7px;
  font-size: 13px;
  font-weight: 600;
  letter-spacing: -0.1px;
  color: #242424;
}

.message-row {
  flex: 1;
  min-height: 0;
  display: flex;
  margin-top: 6px;
}

.message {
  width: 1038px;
  flex: none;
  padding-left: 11px;
  box-sizing: border-box;
  background: #fff;
  overflow: hidden;
  font-size: 12.1px;
  line-height: 17px;
  white-space: nowrap;
  box-shadow: 0 0 1px #ddd;
}

.message p {
  margin: 0 0 41px;
  letter-spacing: -0.14px;
}

.message b {
  color: #242424;
  font-weight: 600;
}

.main-scroll {
  width: 15px;
  padding-left: 3px;
  box-sizing: border-box;
  display: flex;
  flex-direction: column;
  align-items: center;
}

.main-scroll .arrow-up {
  margin-top: 8px;
}

.main-thumb {
  width: 5px;
  height: 55px;
  margin-top: 266px;
  border-radius: 3px;
  background: #d4d4d4;
}

.taskbar {
  height: 40px;
  flex: none;
  display: flex;
  align-items: center;
  background: #1c1c1c;
  color: #fff;
}

.weather {
  padding-left: 10px;
}

.weather svg {
  width: 19px;
  height: 19px;
}

.dock {
  display: flex;
  align-items: center;
  margin-left: 343px;
  gap: 18px;
}

.dock-ico {
  width: 19px;
  height: 19px;
}

.task-search {
  width: 181px;
  height: 25px;
  display: flex;
  align-items: center;
  padding: 0 10px 0 9px;
  box-sizing: border-box;
  border-radius: 13px;
  background: #f3f3f3;
  color: #555;
  font-size: 11px;
  margin: 0 -6.5px 0 -6px;
}

.task-search svg {
  width: 13px;
  height: 13px;
}

.task-search path {
  stroke: #333;
}

.task-search span {
  flex: 1;
  margin-left: 8px;
}

.task-search .bing {
  width: 17px;
  height: 17px;
}

.task-search .bing path {
  stroke: #1e88e5;
}

.edge-wrap {
  position: relative;
}

.edge-wrap::after {
  content: "";
  position: absolute;
  left: 7px;
  bottom: -9px;
  width: 5px;
  height: 2px;
  border-radius: 1px;
  background: #8a8a8a;
}

.dock-active {
  position: relative;
  width: 28px;
  height: 33px;
  display: flex;
  align-items: center;
  justify-content: center;
  margin-left: -4.5px;
  border-radius: 4px;
  background: #2a2a2a;
}

.dock-active::after {
  content: "";
  position: absolute;
  left: 8px;
  bottom: 1px;
  width: 12px;
  height: 2px;
  border-radius: 1px;
  background: #d8c8a8;
}

.outlook-letter {
  font-family: "Liberation Sans", sans-serif;
  font-size: 7.5px;
  font-weight: 700;
  fill: #fff;
}

.pre-letter {
  font-family: "Liberation Sans", sans-serif;
  font-size: 3.8px;
  font-weight: 700;
  fill: #fff;
}

.tray {
  margin-left: auto;
  display: flex;
  align-items: center;
  padding-right: 17px;
}

.tray-up {
  width: 12px;
  height: 12px;
}

.tray-up path,
.tray-sync path,
.tray-ico path {
  stroke: #fff;
}

.tray-cloud {
  width: 15px;
  height: 12px;
  margin-left: 12.5px;
}

.tray-sync {
  width: 16px;
  height: 16px;
  margin-left: 11.5px;
}

.tray-ico {
  width: 15px;
  height: 14px;
  margin-left: 5px;
}

.tray-sync + .tray-ico {
  margin-left: 12px;
}

.clock {
  margin-left: 13px;
  text-align: right;
  font-size: 9.4px;
  line-height: 14px;
}

.notify {
  width: 13px;
  height: 13px;
  margin-left: 10px;
  border-radius: 50%;
  background: #d6c3a1;
  color: #222;
  font-size: 8px;
  line-height: 13px;
  text-align: center;
}
</style>

<style>
html,
body {
  margin: 0;
  background: #fafafa;
}
</style>
